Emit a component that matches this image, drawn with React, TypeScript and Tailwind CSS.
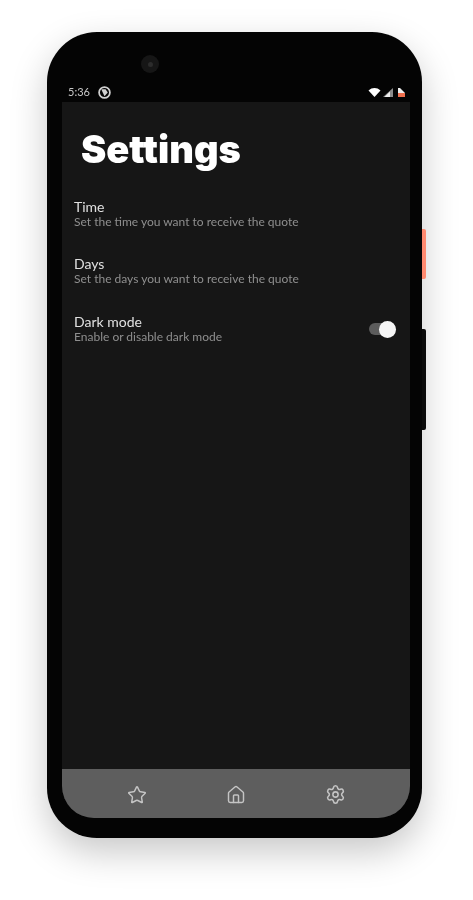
import { Home, Settings, Star } from 'lucide-react'

const SettingRow = ({ title, subtitle, className = '' }: { title: string; subtitle: string; className?: string }) => (
  <div className={`flex flex-col ${className}`}>
    <span className="text-[14px] leading-[15px] text-[#e0e0e0]">{title}</span>
    <span className="text-[12px] leading-[15px] text-[#8f8f8f]">{subtitle}</span>
  </div>
)

export default function App() {
  return (
    <div className="w-[473px] h-[900px] bg-white pt-[32px] pl-[47px] overflow-hidden font-['Lato',sans-serif]">
      <div className="relative w-[375px] h-[806px] rounded-[50px] bg-[#040404] pl-[15px] pr-[12px] pb-[20px] flex flex-col shadow-[0_14px_36px_rgba(0,0,0,0.22)] blur-[0.5px]">
        {/* side buttons */}
        <div className="absolute left-[375px] top-[197px] w-[4px] h-[50px] rounded-r-[2px] bg-[#ff8a70]" />
        <div className="absolute left-[375px] top-[297px] w-[4px] h-[101px] rounded-r-[2px] bg-[#0a0a0a]" />
        {/* camera */}
        <div className="absolute left-[94px] top-[23px] w-[18px] h-[18px] rounded-full bg-[#161616] flex items-center justify-center">
          <div className="w-[5px] h-[5px] rounded-full bg-[#2c2c2c]" />
        </div>

        <div className="h-[70px] shrink-0 flex items-end justify-between pl-[6px] pr-[5px] pb-[3px]">
          <div className="flex items-center gap-[8px]">
            <span className="text-[11px] leading-[14px] text-[#c8c8c8]">5:36</span>
            <svg width="13" height="13" viewBox="0 0 12 12">
              <circle cx="6" cy="6" r="5" fill="none" stroke="#d0d0d0" strokeWidth="1.6" />
              <path d="M3 3h4l2 3-3 3.500z" fill="#d0d0d0" />
            </svg>
          </div>
          <div className="flex items-center gap-[2px] pb-[2px]">
            <svg width="13" height="9" viewBox="0 0 12 9">
              <path d="M0 2.500C3.500-.8 8.500-.8 12 2.500L6 9z" fill="#ffffff" />
            </svg>
            <svg width="10" height="9" viewBox="0 0 10 9">
              <path d="M10 0v9H0z" fill="#8c8c8c" />
              <path d="M7 3.500V9H1.500z" fill="#eeeeee" />
            </svg>
            <svg width="7" height="9" viewBox="0 0 7 9" className="ml-[3px]">
              <path d="M0 0h2l5 5v4H0z" fill="#eeeeee" />
              <path d="M0 5h7v4H0z" fill="#f0704f" />
            </svg>
          </div>
        </div>

        <div className="flex-1 flex flex-col rounded-b-[32px] overflow-hidden bg-[#161616]">
          <div className="flex-1 flex flex-col">
            <h1 className="pl-[19px] pt-[24px] text-[38px] leading-[47px] font-black text-white font-['Inter',sans-serif]">Settings</h1>

            <SettingRow
              className="pl-[12px] mt-[26px]"
              title="Time"
              subtitle="Set the time you want to receive the quote"
            />
            <SettingRow
              className="pl-[12px] mt-[27px]"
              title="Days"
              subtitle="Set the days you want to receive the quote"
            />
            <div className="flex items-center justify-between pl-[12px] pr-[14px] mt-[28px]">
              <SettingRow title="Dark mode" subtitle="Enable or disable dark mode" />
              <div className="relative w-[27px] h-[12px] rounded-full bg-[#5c5c5c]">
                <div className="absolute right-0 top-[-2.500px] w-[17px] h-[17px] rounded-full bg-[#f5f5f5]" />
              </div>
            </div>
          </div>

          <nav className="h-[49px] shrink-0 bg-[#5e5e5e] flex items-center justify-between pl-[65px] pr-[64px] pt-[2px] text-[#c4c4c4]">
            <Star className="w-[20px] h-[20px]" strokeWidth={1.75} />
            <Home className="w-[20px] h-[20px]" strokeWidth={1.75} />
            <Settings className="w-[21px] h-[21px]" strokeWidth={1.75} />
          </nav>
        </div>
      </div>
    </div>
  )
}
